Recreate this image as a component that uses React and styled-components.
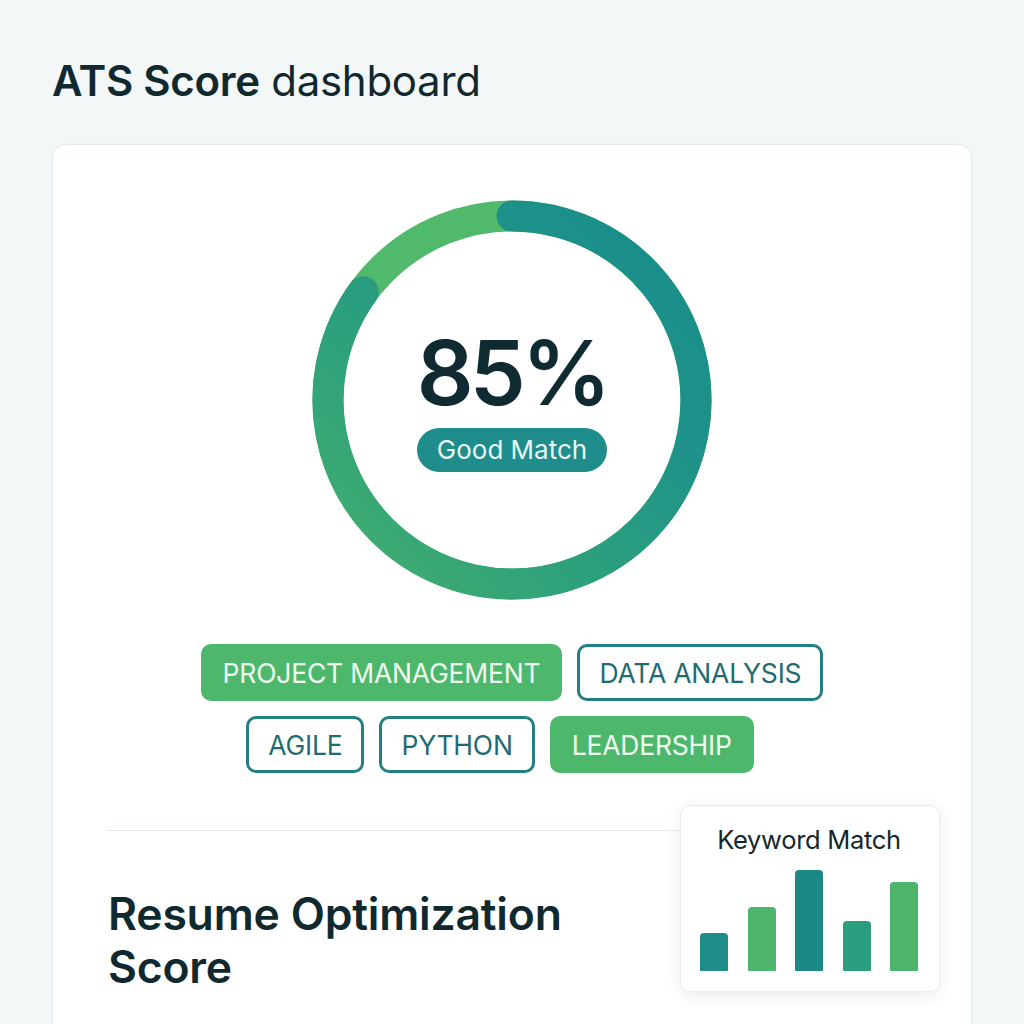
import React from 'react';
import styled, { createGlobalStyle } from 'styled-components';

const GlobalStyle = createGlobalStyle`
  body {
    margin: 0;
    background: #f3f7f8;
    font-family: Inter, "Noto Sans", sans-serif;
    color: #10292f;
  }
`

const Page = styled.div`
  padding: 57px 52px 0;
`

const Title = styled.h1`
  margin: 0;
  font-size: 42px;
  line-height: 48px;
  font-weight: 400;
  letter-spacing: -0.3px;
  color: #10292f;
  b {
    font-weight: 600;
  }
`

const Card = styled.div`
  margin-top: 39px;
  background: #ffffff;
  border: 1px solid #e4eaec;
  border-radius: 14px;
  box-shadow: 0 1px 4px rgba(20, 50, 60, 0.04);
  padding: 55px 55px 60px;
`

const RingWrap = styled.div`
  width: 400px;
  height: 400px;
  margin: 0 auto;
  display: grid;
  > * {
    grid-area: 1 / 1;
  }
`

const RingCenter = styled.div`
  display: flex;
  flex-direction: column;
  align-items: center;
  justify-content: center;
  gap: 10px;
`

const Score = styled.div`
  font-size: 89px;
  line-height: 90px;
  font-weight: 600;
  letter-spacing: -4px;
  color: #0f2a31;
`

const MatchPill = styled.div`
  height: 44px;
  padding: 0 20px;
  border-radius: 22px;
  background: #1e8d8b;
  color: #e8f7f3;
  font-size: 26px;
  line-height: 44px;
  font-weight: 400;
`

const Tags = styled.div`
  margin-top: 44px;
  display: flex;
  flex-direction: column;
  gap: 15px;
`

const TagRow = styled.div`
  display: flex;
  justify-content: center;
  gap: 15px;
  padding-right: ${props => props.$offset || 0}px;
`

const Tag = styled.div`
  box-sizing: border-box;
  height: 57px;
  padding: 0 19px;
  display: flex;
  align-items: center;
  border-radius: 10px;
  font-size: 26.5px;
  font-weight: 400;
  letter-spacing: -0.2px;
  border: 3px solid ${props => props.$filled ? '#4db86b' : '#237f82'};
  background: ${props => props.$filled ? '#4db86b' : '#ffffff'};
  color: ${props => props.$filled ? '#effaf1' : '#1e6c71'};
`

const Bottom = styled.div`
  position: relative;
  margin-top: 57px;
`

const Divider = styled.div`
  height: 1px;
  background: #e3e8ea;
`

const Heading = styled.h2`
  margin: 57px 0 0;
  font-size: 44.5px;
  line-height: 53px;
  font-weight: 600;
  letter-spacing: -0.2px;
  color: #10292f;
`

const KeywordCard = styled.div`
  position: absolute;
  top: -25px;
  right: -24px;
  width: 260px;
  box-sizing: border-box;
  padding: 20px 21px 20px 19px;
  background: #ffffff;
  border: 1px solid #e9eef0;
  border-radius: 10px;
  box-shadow: 0 4px 16px rgba(20, 50, 60, 0.09);
`

const KeywordTitle = styled.div`
  text-align: center;
  font-size: 25.5px;
  line-height: 28px;
  letter-spacing: -0.3px;
  color: #13282d;
`

const Bars = styled.div`
  margin-top: 16px;
  height: 101px;
  display: flex;
  align-items: flex-end;
  justify-content: space-between;
`

const Bar = styled.div`
  width: 28px;
  height: ${props => props.$h}px;
  background: ${props => props.$color};
  border-radius: 4px 4px 1px 1px;
`

const tagsTop = [
  { label: 'PROJECT MANAGEMENT', filled: true },
  { label: 'DATA ANALYSIS', filled: false },
]

const tagsBottom = [
  { label: 'AGILE', filled: false },
  { label: 'PYTHON', filled: false },
  { label: 'LEADERSHIP', filled: true },
]

const bars = [
  { h: 38, color: '#1e8c88' },
  { h: 64, color: '#4db46b' },
  { h: 101, color: '#1b8a86' },
  { h: 50, color: '#2a9e7f' },
  { h: 89, color: '#4cb46b' },
]

const ScoreRing = ({ value }) => {
  const r = 184
  const a = (value / 100) * 2 * Math.PI
  const ex = 200 + r * Math.sin(a)
  const ey = 200 - r * Math.cos(a)
  const large = value > 50 ? 1 : 0
  return (
    <svg width="400" height="400" viewBox="0 0 400 400">
      <defs>
        <linearGradient id="ringGrad" gradientUnits="userSpaceOnUse" x1="400" y1="0" x2="0" y2="400">
          <stop offset="0" stopColor="#178a89" />
          <stop offset="0.35" stopColor="#1f938a" />
          <stop offset="0.65" stopColor="#2ea17c" />
          <stop offset="0.85" stopColor="#3caa72" />
          <stop offset="1" stopColor="#48b36d" />
        </linearGradient>
      </defs>
      <circle cx="200" cy="200" r={r} fill="none" stroke="#51b96b" strokeWidth="31" />
      <path
        d={`M 200 ${200 - r} A ${r} ${r} 0 ${large} 1 ${ex} ${ey}`}
        fill="none"
        stroke="url(#ringGrad)"
        strokeWidth="31"
        strokeLinecap="round"
      />
    </svg>
  )
}

const App = () => {
  return (
    <>
      <GlobalStyle />
      <Page>
        <Title><b>ATS Score</b> dashboard</Title>
        <Card>
          <RingWrap>
            <ScoreRing value={85} />
            <RingCenter>
              <Score>85%</Score>
              <MatchPill>Good Match</MatchPill>
            </RingCenter>
          </RingWrap>

          <Tags>
            <TagRow>
              {tagsTop.map(t => <Tag key={t.label} $filled={t.filled}>{t.label}</Tag>)}
            </TagRow>
            <TagRow $offset={24}>
              {tagsBottom.map(t => <Tag key={t.label} $filled={t.filled}>{t.label}</Tag>)}
            </TagRow>
          </Tags>

          <Bottom>
            <Divider />
            <Heading>Resume Optimization<br />Score</Heading>
            <KeywordCard>
              <KeywordTitle>Keyword Match</KeywordTitle>
              <Bars>
                {bars.map((b, i) => <Bar key={i} $h={b.h} $color={b.color} />)}
              </Bars>
            </KeywordCard>
          </Bottom>
        </Card>
      </Page>
    </>
  )
}

export default App
